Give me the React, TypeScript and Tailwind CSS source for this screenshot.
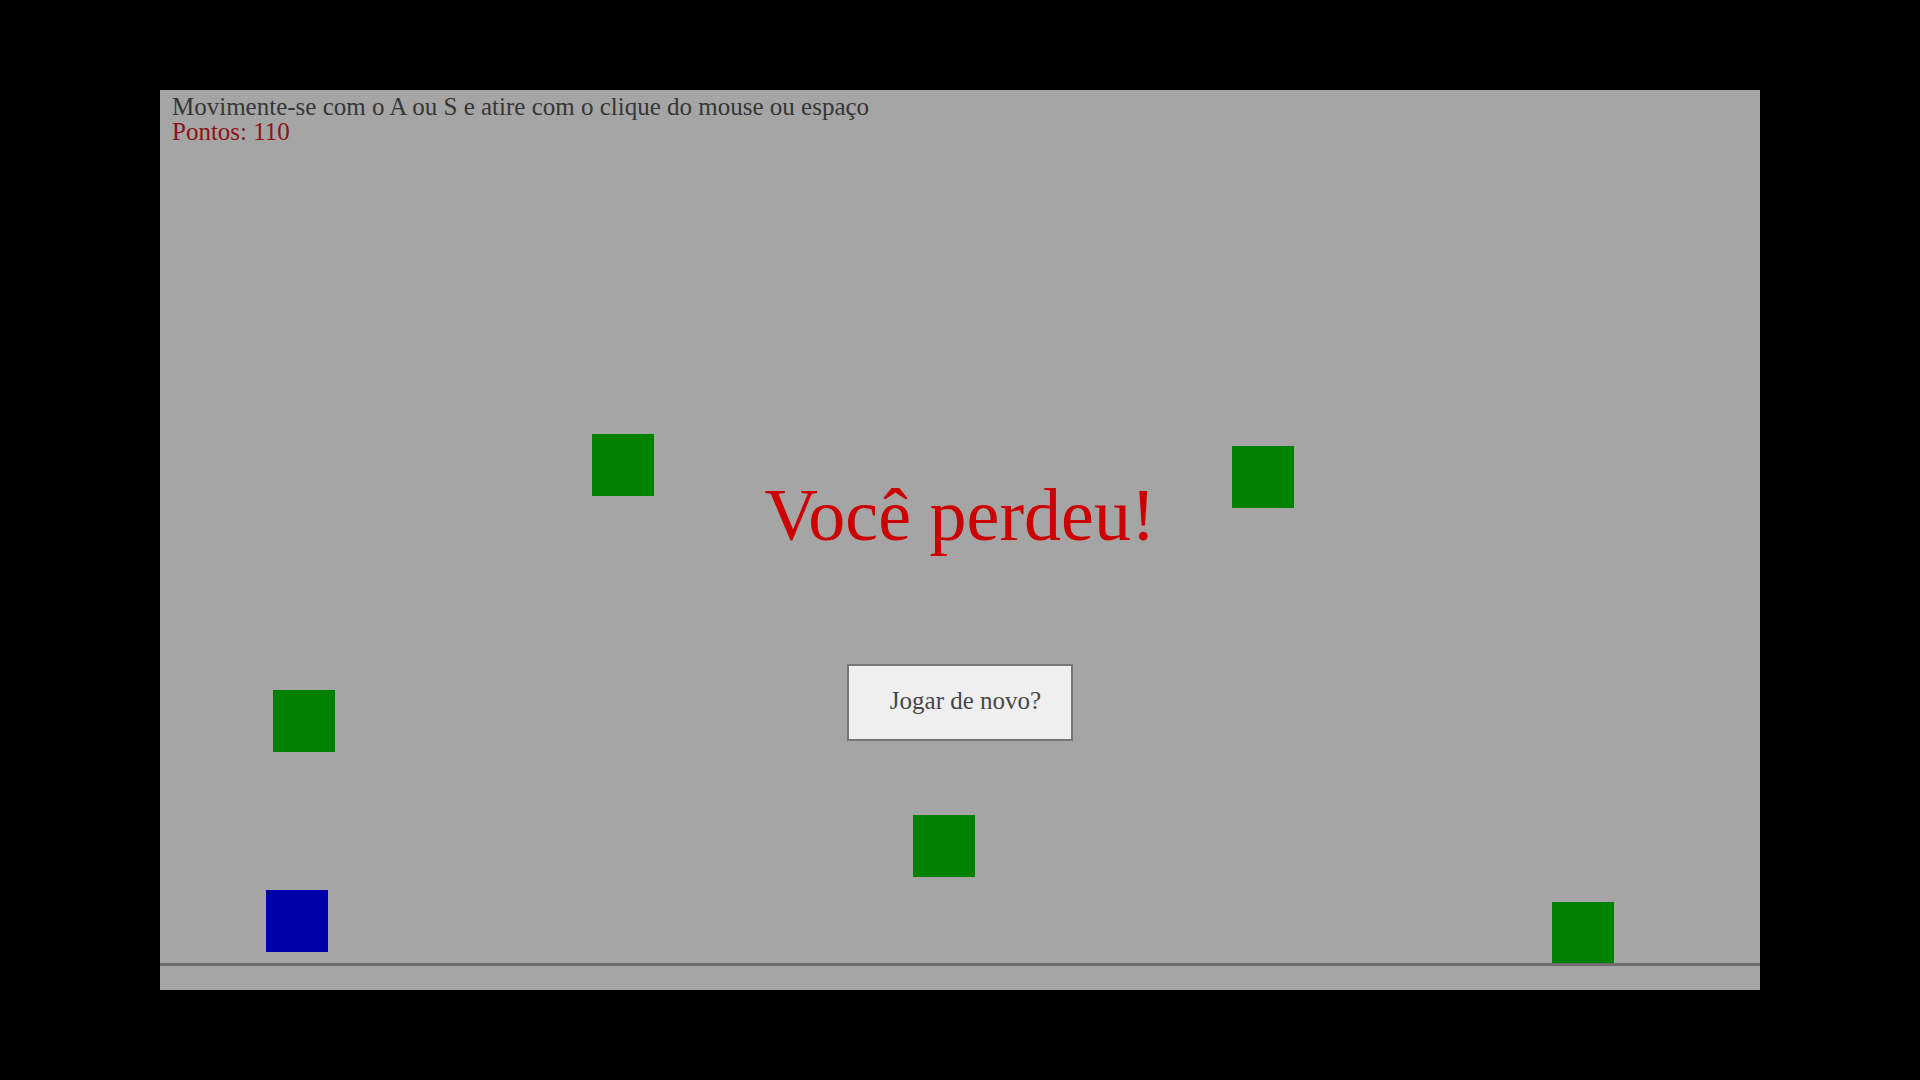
type Block = {
  left: number;
  top: number;
  color: string;
};

// enemy + player positions, taken from the frozen frame
const blocks: Block[] = [
  { left: 432, top: 344, color: "#008000" },
  { left: 1072, top: 356, color: "#008000" },
  { left: 113, top: 600, color: "#008000" },
  { left: 753, top: 725, color: "#008000" },
  { left: 1392, top: 812, color: "#008000" },
  { left: 106, top: 800, color: "#0000a8" },
];

const App = () => {
  return (
    <div className="flex h-screen w-full items-center justify-center bg-black">
      <div
        className="relative h-[900px] w-[1600px] overflow-hidden bg-[#a5a5a5]"
        style={{ fontFamily: '"Liberation Serif", "Times New Roman", serif' }}
      >
        {/* HUD */}
        <div className="flex flex-col pl-3 pt-[4px] text-[25px] leading-[25px]">
          <span className="text-[#363636]">
            Movimente-se com o A ou S e atire com o clique do mouse ou espaço
          </span>
          <span className="text-[#8e1212]">Pontos: 110</span>
        </div>

        {/* squares */}
        {blocks.map((b, i) => (
          <div
            key={i}
            className="absolute h-[62px] w-[62px]"
            style={{ left: b.left, top: b.top, backgroundColor: b.color }}
          />
        ))}

        {/* ground */}
        <div className="absolute left-0 right-0 top-[873px] h-[3px] bg-[#6e6e6e]" />

        {/* game over overlay */}
        <div className="absolute left-0 right-0 top-[389px] flex flex-col items-center">
          <h1 className="text-[74px] leading-[72px] text-[#cc0000]">Você perdeu!</h1>
          <button className="mt-[113px] h-[77px] w-[226px] border-2 border-[#767676] bg-[#efefef] pb-[3px] pl-[11px] text-[25px] text-[#474747]">
            Jogar de novo?
          </button>
        </div>
      </div>
    </div>
  );
};

export default App;
